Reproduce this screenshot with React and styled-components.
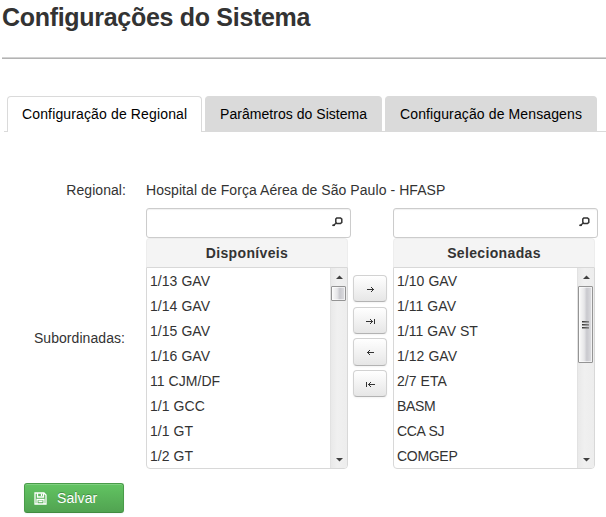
import React from "react";
import styled, { createGlobalStyle } from "styled-components";

const GlobalStyle = createGlobalStyle`
  * { box-sizing: border-box; }
  body {
    margin: 0;
    background: #fff;
    color: #333;
    font: 14px/20px "Liberation Sans", Arial, sans-serif;
    overflow: hidden;
  }
`;

const Page = styled.main`
  width: 606px;
  height: 517px;
  overflow: hidden;
`;

const Title = styled.h1`
  margin: 0;
  padding: 0 0 0 2px;
  height: 57px;
  font-size: 25px;
  line-height: 35px;
  letter-spacing: -0.3px;
  font-weight: bold;
  white-space: nowrap;
`;

const Rule = styled.hr`
  margin: 0 0 37px 2px;
  height: 2px;
  border: 0;
  border-top: 1px solid #d2d2d2;
  background: #b3b3b3;
`;

const Tabs = styled.nav`
  display: flex;
  gap: 3px;
  height: 36px;
  margin-left: 4px;
  padding-left: 3px;
  border-bottom: 1px solid #dadada;
`;

const Tab = styled.button`
  flex: none;
  width: ${(p) => p.$width}px;
  height: ${(p) => (p.$active ? 36 : 35)}px;
  padding: 0 0 ${(p) => (p.$active ? 1 : 0)}px 14px;
  border: 1px solid #dadada;
  border-bottom: 0;
  border-radius: 4px 4px 0 0;
  background: ${(p) => (p.$active ? "#fff" : "#dadada")};
  color: #000;
  font: inherit;
  letter-spacing: ${(p) => p.$tracking}px;
  text-align: left;
  white-space: nowrap;
`;

const Form = styled.form`
  display: grid;
  grid-template-columns: 126px 452px;
  column-gap: 20px;
  padding-top: 48px;
`;

const Label = styled.div`
  height: ${(p) => (p.$tall ? 261 : 28)}px;
  padding: ${(p) => (p.$tall ? "0 1px 2px 0" : "0")};
  letter-spacing: 0.06px;
  display: flex;
  align-items: ${(p) => (p.$tall ? "center" : "flex-start")};
  justify-content: flex-end;
`;

const Value = styled.div`
  letter-spacing: 0.065px;
  white-space: nowrap;
`;

const PickList = styled.div`
  display: grid;
  grid-template-columns: 205px 34px 205px;
  height: 261px;
`;

const Column = styled.section`
  width: 205px;
  margin-left: ${(p) => (p.$last ? 8 : 0)}px;
`;

const Search = styled.div`
  display: flex;
  width: 205px;
  height: 30px;
  border: 1px solid #ccc;
  border-radius: 3px;
  box-shadow: inset 0 1px 1px rgba(0, 0, 0, 0.06);
`;

const SearchInput = styled.input`
  flex: 1;
  min-width: 0;
  border: 0;
  outline: 0;
  background: transparent;
`;

const SearchIcon = styled.svg`
  flex: none;
  width: 11px;
  height: 10px;
  margin: 8px 7px 0 0;
`;

const Caption = styled.h2`
  margin: 0;
  width: 202px;
  height: 29px;
  border: 1px solid #ededed;
  border-bottom: 0;
  border-radius: 4px 4px 0 0;
  background: #f4f4f4;
  font-size: 14px;
  line-height: 28px;
  letter-spacing: 0.35px;
  text-align: center;
`;

const ListBox = styled.div`
  display: flex;
  width: 202px;
  height: 202px;
  border: 1px solid #d8d8d8;
  border-radius: 0 0 4px 4px;
  overflow: hidden;
`;

const Items = styled.ul`
  flex: 1;
  margin: 0;
  padding: 1px 0 0 3px;
  list-style: none;
`;

const Item = styled.li`
  height: 25px;
  line-height: 25px;
  letter-spacing: ${(p) => p.$tracking}px;
  white-space: nowrap;
`;

const ScrollBar = styled.div`
  display: flex;
  flex-direction: column;
  width: 17px;
  border-left: 1px solid #e2e2e2;
  background: linear-gradient(90deg, #e9e9e9, #f0f0f0 40%, #ededed);
`;

const Arrow = styled.svg`
  flex: none;
  width: 16px;
  height: 18px;
`;

const Thumb = styled.div`
  flex: none;
  width: 15px;
  height: ${(p) => p.$height}px;
  display: flex;
  flex-direction: column;
  align-items: center;
  justify-content: center;
  gap: 1px;
  border: 1px solid #949494;
  border-radius: 1px;
  background: linear-gradient(90deg, #f6f6f6 10%, #e6e6e8 40%, #c9c9ce 60%, #dedee1);
  box-shadow: inset 0 0 0 1px rgba(255, 255, 255, 0.6);
`;

const Grip = styled.i`
  width: 7px;
  height: 2px;
  background: linear-gradient(90deg, #333, #888);
  border-bottom: 1px solid #999;
`;

const Track = styled.div`
  flex: 1;
`;

const Moves = styled.div`
  display: grid;
  grid-template-rows: 27px 27px 28px 27px;
  row-gap: 5px;
  align-content: start;
  padding: 67px 0 0 2px;
`;

const Move = styled.button`
  width: 34px;
  height: ${(p) => p.$height}px;
  margin-top: ${(p) => p.$shift}px;
  display: flex;
  align-items: center;
  justify-content: center;
  padding: 1px 0 0;
  border: 1px solid #d2d2d2;
  border-bottom-color: #b3b3b3;
  border-radius: 4px;
  background: linear-gradient(#fff, #e6e6e6);
  box-shadow: 0 1px 2px rgba(0, 0, 0, 0.05);
`;

const Save = styled.button`
  display: flex;
  align-items: center;
  width: 100px;
  height: 30px;
  margin: 14px 0 0 24px;
  padding: 0 0 0 9px;
  gap: 10px;
  border: 1px solid #499c49;
  border-bottom-color: #408b40;
  border-radius: 3px;
  background: linear-gradient(#62c462, #51a351);
  box-shadow: inset 0 1px 0 rgba(255, 255, 255, 0.2), 0 1px 2px rgba(0, 0, 0, 0.05);
  color: #fff;
  font: inherit;
  letter-spacing: 0.1px;
  text-shadow: 0 -1px 0 rgba(0, 0, 0, 0.25);
`;

function Magnifier() {
  return (
    <SearchIcon viewBox="0 0 11 10" fill="none" stroke="#333" strokeWidth="1.5">
      <path d="M3.8 2 4.8.9h3.7l1.3 1.2v3.2L8.5 6.5H4.8l-1-1.2zM4.3 6 1 8.8" />
      <path d="M0.3 8.3h2.6" />
    </SearchIcon>
  );
}

function MoveIcon({ left, end }) {
  return (
    <svg width="11" height="9" viewBox="0 0 11 9" shapeRendering="crispEdges">
      <g fill="#333" transform={left ? "translate(11 0) scale(-1 1)" : undefined}>
        <path d={end
          ? "M1 4h7v1H1zM6 3h1v3H6zM5 2h1v1H5zM5 6h1v1H5zM9 2h1v5H9z"
          : "M2 4h7v1H2zM7 3h1v3H7zM6 2h1v1H6zM6 6h1v1H6z"} />
      </g>
    </svg>
  );
}

function ScrollArrow({ down }) {
  return (
    <Arrow viewBox="0 0 16 18">
      <path d={down ? "M5 8h7L8.5 11.5z" : "M5 11h7L8.5 7.5z"} fill="#404040" />
    </Arrow>
  );
}

function SelectColumn({ title, items, last, thumb }) {
  return (
    <Column $last={last}>
      <Search>
        <SearchInput aria-label={title} />
        <Magnifier />
      </Search>
      <Caption>{title}</Caption>
      <ListBox>
        <Items>
          {items.map((name) => (
            <Item key={name} $tracking={/^[A-Z]/.test(name) ? -0.3 : 0.05}>{name}</Item>
          ))}
        </Items>
        <ScrollBar>
          <ScrollArrow />
          <Thumb $height={thumb}>
            {thumb > 30 && <><Grip /><Grip /><Grip /></>}
          </Thumb>
          <Track />
          <ScrollArrow down />
        </ScrollBar>
      </ListBox>
    </Column>
  );
}

const available = ["1/13 GAV", "1/14 GAV", "1/15 GAV", "1/16 GAV", "11 CJM/DF", "1/1 GCC", "1/1 GT", "1/2 GT"];
const selected = ["1/10 GAV", "1/11 GAV", "1/11 GAV ST", "1/12 GAV", "2/7 ETA", "BASM", "CCA SJ", "COMGEP"];

export default function App() {
  return (
    <Page>
      <GlobalStyle />
      <Title>Configurações do Sistema</Title>
      <Rule />
      <Tabs>
        <Tab $width={195} $tracking={0.14} $active>Configuração de Regional</Tab>
        <Tab $width={177} $tracking={0.04}>Parâmetros do Sistema</Tab>
        <Tab $width={212} $tracking={0.12}>Configuração de Mensagens</Tab>
      </Tabs>
      <Form onSubmit={(e) => e.preventDefault()}>
        <Label>Regional:</Label>
        <Value>Hospital de Força Aérea de São Paulo - HFASP</Value>
        <Label $tall>Subordinadas:</Label>
        <PickList>
          <SelectColumn title="Disponíveis" items={available} thumb={15} />
          <Moves>
            <Move type="button" $height={27} aria-label="Adicionar"><MoveIcon /></Move>
            <Move type="button" $height={27} aria-label="Adicionar todas"><MoveIcon end /></Move>
            <Move type="button" $height={28} $shift={-1} aria-label="Remover"><MoveIcon left /></Move>
            <Move type="button" $height={27} $shift={-2} aria-label="Remover todas"><MoveIcon left end /></Move>
          </Moves>
          <SelectColumn title="Selecionadas" items={selected} last thumb={77} />
        </PickList>
      </Form>
      <Save type="button">
        <svg width="13" height="13" viewBox="0 0 13 13" fill="none" stroke="#fff" strokeWidth="1.3">
          <path d="M1 1h9l2 2v9H1zM3.5 1v4h6V1M3 12V7.5h7V12M4.5 9.5h4" />
          <path d="M7.5 1.5v2.5" />
        </svg>
        Salvar
      </Save>
    </Page>
  );
}
